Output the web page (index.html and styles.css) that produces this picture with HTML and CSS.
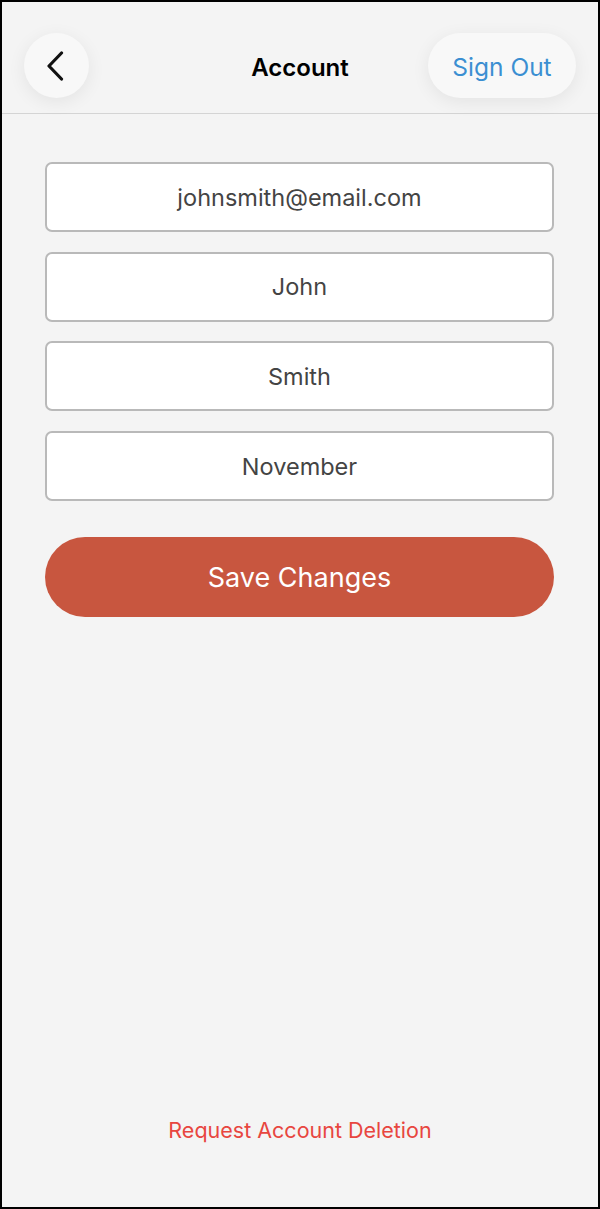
FILE: index.html
```html
<!DOCTYPE html>
<html lang="en">
<head>
    <meta charset="UTF-8">
    <meta name="viewport" content="width=device-width, initial-scale=1.0">
    <title>Account</title>
    <link rel="stylesheet" href="styles.css">
</head>
<body>
    <div class="screen">
        <header class="topbar">
            <button class="back-btn" aria-label="Back">
                <svg width="20" height="30" viewBox="0 0 20 30">
                    <path d="M16.5 2 L4 15 L16.5 28" fill="none" stroke="#111" stroke-width="3.2" stroke-linecap="round" stroke-linejoin="round"/>
                </svg>
            </button>
            <h1 class="title">Account</h1>
            <button class="signout-btn">Sign Out</button>
        </header>

        <main class="content">
            <div class="field">johnsmith@email.com</div>
            <div class="field">John</div>
            <div class="field">Smith</div>
            <div class="field">November</div>
            <button class="save-btn">Save Changes</button>
        </main>

        <footer class="footer">
            <a class="delete-link" href="#">Request Account Deletion</a>
        </footer>
    </div>
</body>
</html>
```

FILE: styles.css
```css
* {
    box-sizing: border-box;
}
body {
    margin: 0;
    font-family: Inter, "Noto Sans", Roboto, sans-serif;
    background: #000;
}
.screen {
    height: 1209px;
    border: 2px solid #000;
    background-color: #f4f4f4;
    display: flex;
    flex-direction: column;
}
.topbar {
    height: 112px;
    padding: 31px 22px 0;
    border-bottom: 1px solid #d4d4d4;
    display: grid;
    grid-template-columns: 1fr auto 1fr;
    align-items: start;
}
.back-btn {
    justify-self: start;
    width: 65px;
    height: 65px;
    border-radius: 50%;
    border: none;
    background-color: #f8f8f8;
    box-shadow: 0 4px 18px rgba(0, 0, 0, 0.07);
    display: flex;
    align-items: center;
    justify-content: center;
    padding: 0 4px 0 0;
}
.title {
    margin: 0;
    font-size: 24px;
    font-weight: 600;
    color: #000;
    line-height: 69px;
}
.signout-btn {
    justify-self: end;
    width: 148px;
    height: 65px;
    border-radius: 33px;
    border: none;
    background-color: #f8f8f8;
    box-shadow: 0 4px 18px rgba(0, 0, 0, 0.07);
    font-family: inherit;
    font-size: 24.5px;
    color: #3b8fd2;
    padding: 2px 0 0;
}
.content {
    flex: 1;
    padding: 48px 44px 0 43px;
    display: flex;
    flex-direction: column;
    gap: 19.7px;
}
.field {
    height: 70px;
    background-color: #fff;
    border: 2px solid #b9b9b9;
    border-radius: 7px;
    display: flex;
    align-items: center;
    justify-content: center;
    font-size: 23.5px;
    color: #444;
}
.save-btn {
    margin-top: 16px;
    height: 80px;
    border: none;
    border-radius: 40px;
    background-color: #c8563f;
    color: #fff;
    font-family: inherit;
    font-size: 27px;
    padding: 2px 0 0;
}
.footer {
    text-align: center;
    padding-bottom: 64px;
}
.delete-link {
    font-size: 21.5px;
    line-height: 26px;
    color: #e8463f;
    text-decoration: none;
}
```
